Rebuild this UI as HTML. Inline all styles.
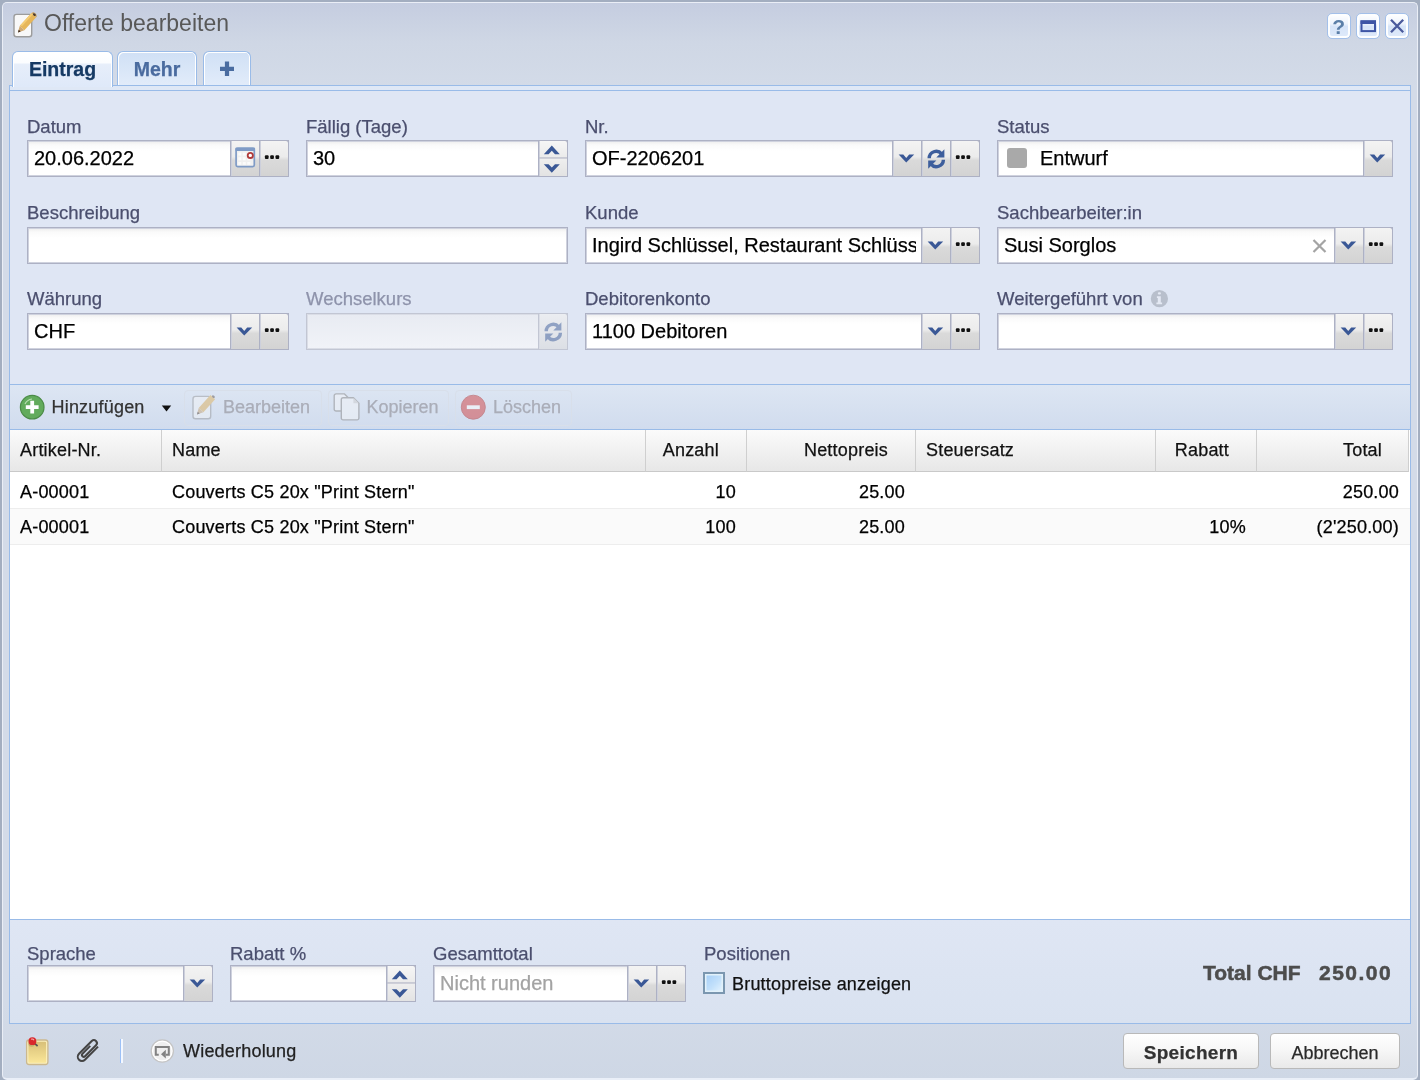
<!DOCTYPE html>
<html><head><meta charset="utf-8">
<style>
*{box-sizing:border-box;margin:0;padding:0}
#root{-webkit-text-stroke:0.25px currentColor}
html,body{width:1420px;height:1080px;overflow:hidden;background:#a3aec0;font-family:"Liberation Sans",sans-serif;position:relative}
.abs{position:absolute}
#win{position:absolute;left:2px;top:2px;width:1416px;height:1078px;border-radius:5px;border:1px solid #eaeef6;border-bottom:2px solid #eaeff8;
 background:linear-gradient(#c5cde0 0px,#cfd7e5 40px,#d3dbe8 85px,#d3dbe8 1000px,#ced7e5 1076px)}
.title{-webkit-text-stroke:0;position:absolute;left:44px;top:8.5px;font-size:23px;color:#585858;line-height:28px;white-space:nowrap}
.tool{position:absolute;top:13px;width:24px;height:26px;border:1px solid #a3c0ea;border-radius:5px;box-shadow:inset 0 0 0 2px #fdfeff;background:linear-gradient(#ffffff,#eef4fd 40%,#d6e4f8 52%,#dfeafb)}
.tool svg{position:absolute;left:0;top:0}
.tab{position:absolute;top:51px;height:35px;border:1px solid #99bbe8;border-bottom:none;border-radius:6px 6px 0 0;box-shadow:inset 1px 1px 0 #fff,inset -1px 0 0 #fff;
 background:linear-gradient(#d0e0f5,#e2ecfa);font-weight:bold;font-size:19.5px;color:#4a6b9f;text-align:center;line-height:34px}
.tab.act{background:linear-gradient(#ffffff 0,#fbfdff 30%,#e6eefa 36%,#dfe9f9 100%);color:#163a64;height:36px;z-index:3;box-shadow:inset 1px 1px 0 #fff,inset -1px 0 0 #fff}
#strip{position:absolute;left:9px;top:85px;width:1402px;height:6px;background:#dfe8f6;border:1px solid #99bbe8;z-index:2}
#form{position:absolute;left:9px;top:90px;width:1402px;height:295px;background:#dfe6f4;border:1px solid #99bbe8;border-top:none}
.lbl{position:absolute;font-size:18.5px;color:#4b4f6e;line-height:20px;white-space:nowrap}
.lbl.dis{color:#8e93ab}
.fld{position:absolute;height:37px;border:1px solid #adb1c4;box-shadow:inset 0 0 0 1px #cfd2de;background:linear-gradient(#ececec 0,#fafafa 4px,#fff 10px);
 font-size:20px;color:#000;line-height:35px;padding-left:6px;white-space:nowrap}
.fld.dis{background:linear-gradient(#e8ebf2,#f1f3f8);border-color:#c2c6d3;box-shadow:inset 0 0 0 1px #dadde6}
.fld .clip{display:block;width:324px;overflow:hidden}
.trg{position:absolute;top:-1px;height:37px;width:30px;border:1px solid #adb1c4;box-shadow:inset 1px 0 0 #cdd0dc;background:linear-gradient(#f3f3f3 0,#ececec 45%,#dadada 55%,#d3d3d3 100%)}
.trg.last{border-top-right-radius:3px}
.trg.spin{background:linear-gradient(#f6f6f6 0,#ebebeb 47%,#eeeeee 53%,#e3e3e3 100%)}
.trg.refdis{background:linear-gradient(#ebedf1,#dcdfe5);border-color:#c2c6d3;box-shadow:inset 1px 0 0 #dadde6}
.trg.refdis svg{opacity:.5}
.ic{position:absolute;left:0;top:0}
.dots{position:absolute;left:6px;top:15px;width:14px;height:4px;
 background:linear-gradient(90deg,#111 0,#111 4px,transparent 4px,transparent 5px,#111 5px,#111 9px,transparent 9px,transparent 10px,#111 10px,#111 14px)}
.sq{display:inline-block;width:20px;height:20px;background:#a9a9a9;border-radius:3px;vertical-align:-3px;margin:0 13px 0 3px}
.info{display:inline-block;width:17px;height:17px;border-radius:50%;background:#b8bccb;color:#fff;font-style:normal;font-weight:bold;font-size:13px;line-height:17px;text-align:center;vertical-align:1px;margin-left:2px}
/* toolbar */
#tbar{position:absolute;left:9px;top:385px;width:1402px;height:45px;border-left:1px solid #99bbe8;border-right:1px solid #99bbe8;background:linear-gradient(#dde6f3,#d1dcee);border-bottom:1px solid #99bbe8}
.tb{position:absolute;top:15px;font-size:18px;line-height:20px;color:#333;white-space:nowrap}
.tb.dis{color:#aaadb8}
.tbf{position:absolute;top:390px;height:36px;border:1px solid #d8dfea;border-radius:4px}
/* grid */
#grid{position:absolute;left:9px;top:430px;width:1402px;height:490px;border-left:1px solid #99bbe8;border-right:1px solid #99bbe8;background:#fff;border-bottom:1px solid #99bbe8}
.gh{position:absolute;top:430px;height:42px;background:linear-gradient(#fbfbfb,#e7e7e7);border-bottom:1px solid #c9c9c9;border-right:1px solid #cfcfcf;
 font-size:18px;line-height:40px;color:#111;white-space:nowrap;padding:0 10px}
.gr{position:absolute;left:10px;width:1400px;border-bottom:1px solid #ededed}
.gc{position:absolute;top:0;font-size:18px;color:#000;white-space:nowrap}
.r{text-align:right}
.ght{position:absolute;top:10px;line-height:20px}
.gc{line-height:20px;letter-spacing:0.2px}
.ght{letter-spacing:0.2px}
.tb{letter-spacing:0.2px}
.gh,.gr,.gc{z-index:1}
.chk{position:absolute;width:22px;height:22px;border:2px solid #7b97b0;background:linear-gradient(135deg,#a3cdf7 0,#c2e0fb 55%,#e8f5fe 100%);box-shadow:inset 0 0 0 1.5px #e2f1fa}
.tot{-webkit-text-stroke:0.5px currentColor;position:absolute;font-size:21px;font-weight:bold;color:#4d4d4d;line-height:24px;white-space:nowrap}
.fld .ph{color:#a3a3a3}
/* bottom form */
#bform{position:absolute;left:9px;top:920px;width:1402px;height:104px;background:linear-gradient(#dfe6f4,#d9e2f0);border:1px solid #99bbe8;border-top:none}
/* bottom bar */
.btn{position:absolute;top:1033px;height:36px;border:1px solid #b9b9b9;border-radius:4px;background:linear-gradient(#ffffff,#f6f6f6 50%,#e9e9e9);
 font-size:19px;color:#333;text-align:center;line-height:38px}
</style></head><body><div id="root" style="position:absolute;left:0;top:0;width:1420px;height:1080px;will-change:transform">
<div id="win"></div>

<!-- header -->
<svg class="abs" style="left:10px;top:10px" width="30" height="30" viewBox="0 0 30 30">
 <rect x="4" y="4.4" width="17.7" height="22.4" rx="2.5" fill="#f8f8f8" stroke="#9c9c9c" stroke-width="1.4"/>
 <path d="M9.67 15.92L21.43 2.98L26.15 7.28L14.39 20.22Z" fill="#e6b65a"/>
 <path d="M10.5 15L21.6 3L23 4.3L11.9 16.3Z" fill="#f4cc74"/>
 <path d="M8 22.5L9.67 15.92L14.39 20.22Z" fill="#cfa872"/>
 <path d="M8 22.5L8.7 19.76L10.66 21.54Z" fill="#3b2b22"/>
 <path d="M21.43 2.98L26.15 7.28L27 6.3Q26.8 3.6 23.4 2Z" fill="#c9a46a"/>
 <ellipse cx="24.4" cy="4.6" rx="1.6" ry="1.1" transform="rotate(42 24.4 4.6)" fill="#4a3a30"/>
</svg>
<div class="title">Offerte bearbeiten</div>
<div class="tool" style="left:1327px"><svg width="24" height="26" viewBox="0 0 24 26"><text x="10.7" y="19.8" text-anchor="middle" font-family="Liberation Sans" font-weight="bold" font-size="21" fill="#5b7fa8">?</text></svg></div>
<div class="tool" style="left:1356px"><svg width="24" height="26" viewBox="0 0 24 26"><rect x="4.5" y="7.4" width="13.5" height="9.7" fill="none" stroke="#3d55a5" stroke-width="2"/><rect x="3.5" y="6.4" width="15.5" height="3.6" fill="#3d55a5"/></svg></div>
<div class="tool" style="left:1385px"><svg width="24" height="26" viewBox="0 0 24 26"><path d="M5 5.8L17.2 18.3M17.2 5.8L5 18.3" stroke="#4a5a9c" stroke-width="2.3"/></svg></div>

<!-- tabs -->
<div class="tab act" style="left:12px;width:101px">Eintrag</div>
<div class="tab" style="left:117px;width:80px">Mehr</div>
<div class="tab" style="left:203px;width:48px"><svg class="abs" style="left:0;top:0" width="46" height="34" viewBox="0 0 46 34"><path d="M23 9.6V24M16 16.8H30" stroke="#4a6ca0" stroke-width="4.2"/></svg></div>
<div id="strip"></div>
<div id="form"></div>

<div class="lbl " style="left:27px;top:117px">Datum</div>
<div class="fld " style="left:27px;top:140px;width:262px"><span class="">20.06.2022</span><div class="trg" style="left:202px"><svg class="ic" width="29" height="36" viewBox="0 0 29 36"><rect x="5.1" y="7.4" width="18.2" height="18.3" rx="1.6" fill="#f0f0f0" stroke="#7f9bc6" stroke-width="1.7"/><rect x="4.3" y="6.6" width="19.8" height="3.3" rx="1.2" fill="#7f9bc6"/><g fill="#fbfbfb"><rect x="7.3" y="11.6" width="3" height="3"/><rect x="11.8" y="11.6" width="3" height="3"/><rect x="7.3" y="16.3" width="3" height="3"/><rect x="11.8" y="16.3" width="3" height="3"/><rect x="16.3" y="16.3" width="3" height="3"/><rect x="7.3" y="21" width="3" height="2.8"/><rect x="11.8" y="21" width="3" height="2.8"/><rect x="16.3" y="21" width="3" height="2.8"/></g><circle cx="19.3" cy="14.4" r="2.6" fill="#fff" stroke="#b03a3a" stroke-width="1.8"/></svg></div><div class="trg last" style="left:231px"><svg class="ic" width="29" height="36" viewBox="0 0 29 36"><g fill="#111"><rect x="4.9" y="14.3" width="3.7" height="3.8" rx="1"/><rect x="10.2" y="14.3" width="3.7" height="3.8" rx="1"/><rect x="15.5" y="14.3" width="3.7" height="3.8" rx="1"/></g></svg></div></div>
<div class="lbl " style="left:306px;top:117px">F&auml;llig (Tage)</div>
<div class="fld " style="left:306px;top:140px;width:262px"><span class="">30</span><div class="trg last spin" style="left:231px"><svg class="ic" width="29" height="36" viewBox="0 0 29 36"><rect x="0" y="16.3" width="28" height="1.3" fill="#b9bccb"/><path d="M4.8 13.2L12.8 4.6L20.8 13.2H16L12.8 9.8L9.6 13.2Z" fill="#3a5896"/><path d="M4.8 23.2H9.6L12.8 26.6L16 23.2H20.8L12.8 31.8Z" fill="#3a5896"/></svg></div></div>
<div class="lbl " style="left:585px;top:117px">Nr.</div>
<div class="fld " style="left:585px;top:140px;width:395px"><span class="">OF-2206201</span><div class="trg" style="left:306px"><svg class="ic" width="29" height="36" viewBox="0 0 29 36"><path d="M5.6 13.5H10.3L13.25 16.9L16.2 13.5H21.2L13.25 21.6Z" fill="#3a5896"/></svg></div><div class="trg" style="left:335px"><svg class="ic" width="29" height="36" viewBox="0 0 29 36"><g fill="none" stroke="#3d5e9c" stroke-width="3.4"><path d="M7.2 17.2a7 7 0 0 1 12.4-4.3"/><path d="M21.4 18.8a7 7 0 0 1-12.4 4.3"/></g><path d="M22.4 8.3V16.4H14.3Z" fill="#3d5e9c"/><path d="M6.2 27.7V19.6H14.3Z" fill="#3d5e9c"/></svg></div><div class="trg last" style="left:364px"><svg class="ic" width="29" height="36" viewBox="0 0 29 36"><g fill="#111"><rect x="4.9" y="14.3" width="3.7" height="3.8" rx="1"/><rect x="10.2" y="14.3" width="3.7" height="3.8" rx="1"/><rect x="15.5" y="14.3" width="3.7" height="3.8" rx="1"/></g></svg></div></div>
<div class="lbl " style="left:997px;top:117px">Status</div>
<div class="fld " style="left:997px;top:140px;width:396px"><span class="st"><i class="sq"></i>Entwurf</span><div class="trg last" style="left:365px"><svg class="ic" width="29" height="36" viewBox="0 0 29 36"><path d="M5.6 13.5H10.3L13.25 16.9L16.2 13.5H21.2L13.25 21.6Z" fill="#3a5896"/></svg></div></div>
<div class="lbl " style="left:27px;top:203px">Beschreibung</div>
<div class="fld " style="left:27px;top:227px;width:541px"></div>
<div class="lbl " style="left:585px;top:203px">Kunde</div>
<div class="fld " style="left:585px;top:227px;width:395px"><span class="clip">Ingird Schl&uuml;ssel, Restaurant Schl&uuml;ssel</span><div class="trg" style="left:335px"><svg class="ic" width="29" height="36" viewBox="0 0 29 36"><path d="M5.6 13.5H10.3L13.25 16.9L16.2 13.5H21.2L13.25 21.6Z" fill="#3a5896"/></svg></div><div class="trg last" style="left:364px"><svg class="ic" width="29" height="36" viewBox="0 0 29 36"><g fill="#111"><rect x="4.9" y="14.3" width="3.7" height="3.8" rx="1"/><rect x="10.2" y="14.3" width="3.7" height="3.8" rx="1"/><rect x="15.5" y="14.3" width="3.7" height="3.8" rx="1"/></g></svg></div></div>
<div class="lbl " style="left:997px;top:203px">Sachbearbeiter:in</div>
<div class="fld " style="left:997px;top:227px;width:396px"><span class="">Susi Sorglos</span><svg class="ic" style="left:314px;top:11px" width="15" height="14" viewBox="0 0 15 14"><path d="M1.5 1L13.5 13M13.5 1L1.5 13" stroke="#a4a4a4" stroke-width="2.2"/></svg><div class="trg" style="left:336px"><svg class="ic" width="29" height="36" viewBox="0 0 29 36"><path d="M5.6 13.5H10.3L13.25 16.9L16.2 13.5H21.2L13.25 21.6Z" fill="#3a5896"/></svg></div><div class="trg last" style="left:365px"><svg class="ic" width="29" height="36" viewBox="0 0 29 36"><g fill="#111"><rect x="4.9" y="14.3" width="3.7" height="3.8" rx="1"/><rect x="10.2" y="14.3" width="3.7" height="3.8" rx="1"/><rect x="15.5" y="14.3" width="3.7" height="3.8" rx="1"/></g></svg></div></div>
<div class="lbl " style="left:27px;top:289px">W&auml;hrung</div>
<div class="fld " style="left:27px;top:313px;width:262px"><span class="">CHF</span><div class="trg" style="left:202px"><svg class="ic" width="29" height="36" viewBox="0 0 29 36"><path d="M5.6 13.5H10.3L13.25 16.9L16.2 13.5H21.2L13.25 21.6Z" fill="#3a5896"/></svg></div><div class="trg last" style="left:231px"><svg class="ic" width="29" height="36" viewBox="0 0 29 36"><g fill="#111"><rect x="4.9" y="14.3" width="3.7" height="3.8" rx="1"/><rect x="10.2" y="14.3" width="3.7" height="3.8" rx="1"/><rect x="15.5" y="14.3" width="3.7" height="3.8" rx="1"/></g></svg></div></div>
<div class="lbl dis" style="left:306px;top:289px">Wechselkurs</div>
<div class="fld dis" style="left:306px;top:313px;width:262px"><div class="trg last refdis" style="left:231px"><svg class="ic" width="29" height="36" viewBox="0 0 29 36"><g fill="none" stroke="#3d5e9c" stroke-width="3.4"><path d="M7.2 17.2a7 7 0 0 1 12.4-4.3"/><path d="M21.4 18.8a7 7 0 0 1-12.4 4.3"/></g><path d="M22.4 8.3V16.4H14.3Z" fill="#3d5e9c"/><path d="M6.2 27.7V19.6H14.3Z" fill="#3d5e9c"/></svg></div></div>
<div class="lbl " style="left:585px;top:289px">Debitorenkonto</div>
<div class="fld " style="left:585px;top:313px;width:395px"><span class="">1100 Debitoren</span><div class="trg" style="left:335px"><svg class="ic" width="29" height="36" viewBox="0 0 29 36"><path d="M5.6 13.5H10.3L13.25 16.9L16.2 13.5H21.2L13.25 21.6Z" fill="#3a5896"/></svg></div><div class="trg last" style="left:364px"><svg class="ic" width="29" height="36" viewBox="0 0 29 36"><g fill="#111"><rect x="4.9" y="14.3" width="3.7" height="3.8" rx="1"/><rect x="10.2" y="14.3" width="3.7" height="3.8" rx="1"/><rect x="15.5" y="14.3" width="3.7" height="3.8" rx="1"/></g></svg></div></div>
<div class="lbl " style="left:997px;top:289px">Weitergef&uuml;hrt von</div>
<svg class="abs" style="left:1150px;top:289px" width="19" height="19" viewBox="0 0 19 19"><circle cx="9.4" cy="9.7" r="8.6" fill="#b8bfcc"/><rect x="7.9" y="3.2" width="3" height="2.3" rx="1" fill="#e4e9f4"/><path d="M6.9 7.3H10.8V13.5H12.1V15.3H6.4V13.5H7.8V9.1H6.9Z" fill="#e4e9f4"/></svg>
<div class="fld " style="left:997px;top:313px;width:396px"><div class="trg" style="left:336px"><svg class="ic" width="29" height="36" viewBox="0 0 29 36"><path d="M5.6 13.5H10.3L13.25 16.9L16.2 13.5H21.2L13.25 21.6Z" fill="#3a5896"/></svg></div><div class="trg last" style="left:365px"><svg class="ic" width="29" height="36" viewBox="0 0 29 36"><g fill="#111"><rect x="4.9" y="14.3" width="3.7" height="3.8" rx="1"/><rect x="10.2" y="14.3" width="3.7" height="3.8" rx="1"/><rect x="15.5" y="14.3" width="3.7" height="3.8" rx="1"/></g></svg></div></div>

<!-- toolbar -->
<div id="tbar"></div>
<div class="tbf" style="left:184px;width:138px"></div>
<div class="tbf" style="left:328px;width:121px"></div>
<div class="tbf" style="left:455px;width:117px"></div>
<svg class="abs" style="left:19px;top:394px" width="27" height="27" viewBox="0 0 27 27"><circle cx="13.2" cy="13.2" r="11.8" fill="#62ab5c" stroke="#4b8b47" stroke-width="1.2"/><path d="M6 10a9 9 0 0 1 7-5" stroke="#b9e0b3" stroke-width="1.2" fill="none"/><path d="M13.2 6.8V19.6M6.8 13.2H19.6" stroke="#fff" stroke-width="3.8"/></svg>
<div class="tb" style="left:51.5px;top:397px">Hinzuf&uuml;gen</div>
<svg class="abs" style="left:161px;top:405px" width="11" height="7" viewBox="0 0 11 7"><path d="M0.8 0.6H10.2L5.5 6.4Z" fill="#111"/></svg>
<svg class="abs" style="left:189px;top:392px;opacity:.42" width="30" height="30" viewBox="0 0 30 30"><rect x="4" y="4.4" width="17.7" height="22.4" rx="2.5" fill="#f8f8f8" stroke="#8c8c8c" stroke-width="1.4"/><path d="M9.67 15.92L21.43 2.98L26.15 7.28L14.39 20.22Z" fill="#e0a840"/><path d="M8 22.5L9.67 15.92L14.39 20.22Z" fill="#c49a62"/><path d="M8 22.5L8.7 19.76L10.66 21.54Z" fill="#2b1b12"/><ellipse cx="24.4" cy="4.6" rx="1.6" ry="1.1" transform="rotate(42 24.4 4.6)" fill="#4a3a30"/></svg>
<div class="tb dis" style="left:223px;top:397px;letter-spacing:0">Bearbeiten</div>
<svg class="abs" style="left:333px;top:392px;opacity:.55" width="28" height="30" viewBox="0 0 28 30"><path d="M3 1.9H11.5L14.8 5.2V19H3A1.8 1.8 0 0 1 1.2 17.2V3.7A1.8 1.8 0 0 1 3 1.9Z" fill="#f2f4f8" stroke="#8f8f8f" stroke-width="1.4"/><path d="M10.1 5.8H20.4L25.9 11.3V26.1A1.8 1.8 0 0 1 24.1 27.9H10.1A1.8 1.8 0 0 1 8.3 26.1V7.6A1.8 1.8 0 0 1 10.1 5.8Z" fill="#f2f4f8" stroke="#8f8f8f" stroke-width="1.4"/><path d="M20.4 5.8V11.3H25.9Z" fill="#cfcfcf"/></svg>
<div class="tb dis" style="left:366.5px;top:397px;letter-spacing:0">Kopieren</div>
<svg class="abs" style="left:460px;top:394px" width="27" height="27" viewBox="0 0 27 27" opacity="0.48"><circle cx="13.3" cy="13.2" r="12" fill="#d13a3a" stroke="#b02a2a" stroke-width="1"/><path d="M6.8 13.2H19.8" stroke="#fff" stroke-width="3.8"/></svg>
<div class="tb dis" style="left:493px;top:397px;letter-spacing:0">L&ouml;schen</div>

<!-- grid -->
<div id="grid"></div>
<div class="gh" style="left:10px;width:152px"><span class="ght" style="left:10px">Artikel-Nr.</span></div>
<div class="gh" style="left:162px;width:484px"><span class="ght" style="left:10px">Name</span></div>
<div class="gh" style="left:646px;width:101px"><span class="ght" style="right:27px">Anzahl</span></div>
<div class="gh" style="left:747px;width:169px"><span class="ght" style="right:27px">Nettopreis</span></div>
<div class="gh" style="left:916px;width:240px"><span class="ght" style="left:10px">Steuersatz</span></div>
<div class="gh" style="left:1156px;width:101px"><span class="ght" style="right:27px">Rabatt</span></div>
<div class="gh" style="left:1257px;width:152px"><span class="ght" style="right:26px">Total</span></div>
<div class="gr" style="top:472px;height:37px;background:#fff"></div>
<div class="gc" style="left:20px;top:482px">A-00001</div>
<div class="gc" style="left:172px;top:482px">Couverts C5 20x "Print Stern"</div>
<div class="gc" style="left:645px;width:91px;top:482px;text-align:right">10</div>
<div class="gc" style="left:746px;width:159px;top:482px;text-align:right">25.00</div>
<div class="gc" style="left:1256px;width:143px;top:482px;text-align:right">250.00</div>
<div class="gr" style="top:509px;height:36px;background:#fafafa"></div>
<div class="gc" style="left:20px;top:517px">A-00001</div>
<div class="gc" style="left:172px;top:517px">Couverts C5 20x "Print Stern"</div>
<div class="gc" style="left:645px;width:91px;top:517px;text-align:right">100</div>
<div class="gc" style="left:746px;width:159px;top:517px;text-align:right">25.00</div>
<div class="gc" style="left:1155px;width:91px;top:517px;text-align:right">10%</div>
<div class="gc" style="left:1256px;width:143px;top:517px;text-align:right">(2'250.00)</div>

<!-- bottom form -->
<div id="bform"></div>
<div class="lbl " style="left:27px;top:944px">Sprache</div>
<div class="fld sm" style="left:27px;top:965px;width:186px"><div class="trg last" style="left:155px"><svg class="ic" width="29" height="36" viewBox="0 0 29 36"><path d="M5.6 13.5H10.3L13.25 16.9L16.2 13.5H21.2L13.25 21.6Z" fill="#3a5896"/></svg></div></div>
<div class="lbl " style="left:230px;top:944px">Rabatt %</div>
<div class="fld sm" style="left:230px;top:965px;width:186px"><div class="trg last spin" style="left:155px"><svg class="ic" width="29" height="36" viewBox="0 0 29 36"><rect x="0" y="16.3" width="28" height="1.3" fill="#b9bccb"/><path d="M4.8 13.2L12.8 4.6L20.8 13.2H16L12.8 9.8L9.6 13.2Z" fill="#3a5896"/><path d="M4.8 23.2H9.6L12.8 26.6L16 23.2H20.8L12.8 31.8Z" fill="#3a5896"/></svg></div></div>
<div class="lbl " style="left:433px;top:944px">Gesamttotal</div>
<div class="fld sm" style="left:433px;top:965px;width:253px"><span class="ph">Nicht runden</span><div class="trg" style="left:193px"><svg class="ic" width="29" height="36" viewBox="0 0 29 36"><path d="M5.6 13.5H10.3L13.25 16.9L16.2 13.5H21.2L13.25 21.6Z" fill="#3a5896"/></svg></div><div class="trg last" style="left:222px"><svg class="ic" width="29" height="36" viewBox="0 0 29 36"><g fill="#111"><rect x="4.9" y="14.3" width="3.7" height="3.8" rx="1"/><rect x="10.2" y="14.3" width="3.7" height="3.8" rx="1"/><rect x="15.5" y="14.3" width="3.7" height="3.8" rx="1"/></g></svg></div></div>
<div class="lbl " style="left:704px;top:944px">Positionen</div>
<div class="chk" style="left:703px;top:972px"></div>
<div class="tb" style="left:732px;top:974px;color:#111">Bruttopreise anzeigen</div>
<div class="tot" style="left:1203px;top:961px">Total CHF</div>
<div class="tot" style="left:1319px;top:961px;letter-spacing:1.5px">250.00</div>

<!-- bottom bar -->
<svg class="abs" style="left:22px;top:1034px" width="30" height="34" viewBox="0 0 30 34"><defs><linearGradient id="ng" x1="0" y1="0" x2="0" y2="1"><stop offset="0" stop-color="#d8c079"/><stop offset="1" stop-color="#fae698"/></linearGradient></defs><rect x="4.6" y="6" width="21.3" height="24.5" rx="2.5" fill="#fbf0bd" stroke="#cbb88e" stroke-width="1.3"/><rect x="6.4" y="7.8" width="17.7" height="20.9" rx="1" fill="url(#ng)"/><circle cx="9.6" cy="9.6" r="3.2" fill="#b5a565" opacity="0.7"/><path d="M12.2 9.2L15.6 12" stroke="#555" stroke-width="1.7"/><circle cx="10.4" cy="7.2" r="3.9" fill="#d9282c"/><path d="M9 5.2Q11 4.6 12 6.2" stroke="#f6b0b0" stroke-width="1.1" fill="none"/></svg>
<svg class="abs" style="left:75px;top:1035px" width="28" height="30" viewBox="0 0 28 30"><g transform="translate(13 15.7) rotate(-45)"><path d="M10 4.2L-8.5 4.2A4.2 4.2 0 0 1 -8.5 -4.2L9.5 -4.2A3 3 0 0 1 9.5 1.8L-6 1.8A1.8 1.8 0 0 1 -6 -1.8L5 -1.8" fill="none" stroke="#444" stroke-width="2"/></g></svg>
<div class="abs" style="left:120px;top:1039px;width:3px;height:24px;background:linear-gradient(90deg,#9cc0f6 0,#9cc0f6 1.5px,#f4f8ff 1.5px)"></div>
<svg class="abs" style="left:150px;top:1039px" width="26" height="26" viewBox="0 0 26 26"><circle cx="12.3" cy="12" r="11.1" fill="#fff" stroke="#c4c4c4" stroke-width="1.3"/><circle cx="12.3" cy="12" r="9.2" fill="#efefef"/><path d="M8.75 15.8H5.8V8.1H18.8V15.8H16" fill="none" stroke="#828282" stroke-width="2"/><path d="M11 15.2L15.8 10.8V19.5Z" fill="#828282"/></svg>
<div class="tb" style="left:183px;top:1041px;color:#222">Wiederholung</div>
<div class="btn" style="left:1123px;width:136px;font-weight:bold;letter-spacing:0.3px">Speichern</div>
<div class="btn" style="left:1270px;width:130px;font-size:18px;color:#2a2a2a">Abbrechen</div>
</div></body></html>
